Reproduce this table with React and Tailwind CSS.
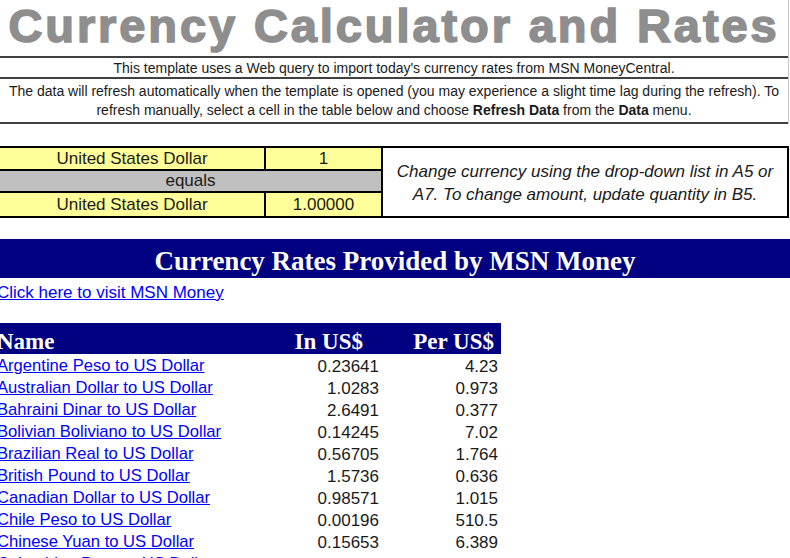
const rates = [
  ['Argentine Peso to US Dollar', '0.23641', '4.23'],
  ['Australian Dollar to US Dollar', '1.0283', '0.973'],
  ['Bahraini Dinar to US Dollar', '2.6491', '0.377'],
  ['Bolivian Boliviano to US Dollar', '0.14245', '7.02'],
  ['Brazilian Real to US Dollar', '0.56705', '1.764'],
  ['British Pound to US Dollar', '1.5736', '0.636'],
  ['Canadian Dollar to US Dollar', '0.98571', '1.015'],
  ['Chile Peso to US Dollar', '0.00196', '510.5'],
  ['Chinese Yuan to US Dollar', '0.15653', '6.389'],
  ['Colombian Peso to US Dollar', '0.00053', '1887'],
]

export default function App() {
  return (
    <div className="w-[790px] h-[558px] overflow-hidden bg-white text-[#1a1a1a] font-['Liberation_Sans',Arial,sans-serif]">
      {/* header block */}
      <div className="w-[789px] border-r border-[#c8c8c8]">
        <div className="h-[58px] border-b-2 border-[#404040] flex items-center justify-center">
          <h1 className="text-[47px] leading-none font-bold text-[#8e8e8e] tracking-[2.9px] [-webkit-text-stroke:1.6px_#8e8e8e] -mt-[6px]">
            Currency Calculator and Rates
          </h1>
        </div>
        <div className="h-[21px] border-b-2 border-[#404040] flex items-center justify-center text-[14px] leading-none">
          This template uses a Web query to import today's currency rates from MSN MoneyCentral.
        </div>
        <div className="h-[45px] border-b-2 border-[#404040] flex flex-col items-center justify-center text-[14px] leading-[19px] text-center whitespace-nowrap">
          <span>The data will refresh automatically when the template is opened (you may experience a slight time lag during the refresh). To</span>
          <span>
            refresh manually, select a cell in the table below and choose <b>Refresh Data</b> from the <b>Data</b> menu.
          </span>
        </div>
      </div>

      {/* calculator */}
      <div className="mt-[22px] flex h-[72px]">
        <div className="w-[383px] border-y-2 border-r-2 border-black grid grid-cols-[266px_1fr] grid-rows-3 text-[17px] leading-none">
          <div className="bg-[#ffff99] border-r-2 border-b-2 border-black flex items-center justify-center">United States Dollar</div>
          <div className="bg-[#ffff99] border-b-2 border-black flex items-center justify-center">1</div>
          <div className="col-span-2 bg-[#c0c0c0] border-b-2 border-black flex items-center justify-center">equals</div>
          <div className="bg-[#ffff99] border-r-2 border-black flex items-center justify-center">United States Dollar</div>
          <div className="bg-[#ffff99] flex items-center justify-center">1.00000</div>
        </div>
        <div className="w-[406px] border-2 border-l-0 border-black flex flex-col items-center justify-center text-[17px] leading-[23px] italic text-center pt-[2px]">
          <span>Change currency using the drop-down list in A5 or</span>
          <span>A7. To change amount, update quantity in B5.</span>
        </div>
      </div>

      {/* rates banner */}
      <div className="mt-[21px] h-[39px] bg-[#000080] flex items-center justify-center">
        <h2 className="text-[27px] leading-none font-bold text-white font-['Liberation_Serif','Times_New_Roman',serif] mt-[6px]">
          Currency Rates Provided by MSN Money
        </h2>
      </div>
      <div className="h-[26px] flex items-center pt-[3px]">
        <a href="#" className="-ml-[3px] text-[17px] leading-none text-[#0000ff] underline">Click here to visit MSN Money</a>
      </div>

      {/* table */}
      <table className="mt-[19px] w-[501px] border-collapse table-fixed">
        <colgroup>
          <col className="w-[283px]" />
          <col className="w-[99px]" />
          <col className="w-[119px]" />
        </colgroup>
        <thead>
          <tr className="h-[31px] bg-[#000080] text-white font-['Liberation_Serif','Times_New_Roman',serif] text-[23px] font-bold">
            <th className="text-left -indent-[3px] pt-[5px] leading-none">Name</th>
            <th className="text-right pr-[19px] pt-[5px] leading-none">In US$</th>
            <th className="text-right pr-[7px] pt-[5px] leading-none">Per US$</th>
          </tr>
        </thead>
        <tbody className="text-[17px] leading-none">
          {rates.map(([name, inUsd, perUsd]) => (
            <tr key={name} className="h-[22px]">
              <td className="p-0 pt-[2px] whitespace-nowrap">
                <a href="#" className="-ml-[3px] text-[16.6px] text-[#0000ff] underline">{name}</a>
              </td>
              <td className="p-0 pt-[2px] pr-[3px] text-right">{inUsd}</td>
              <td className="p-0 pt-[2px] pr-[3px] text-right">{perUsd}</td>
            </tr>
          ))}
        </tbody>
      </table>
    </div>
  )
}
